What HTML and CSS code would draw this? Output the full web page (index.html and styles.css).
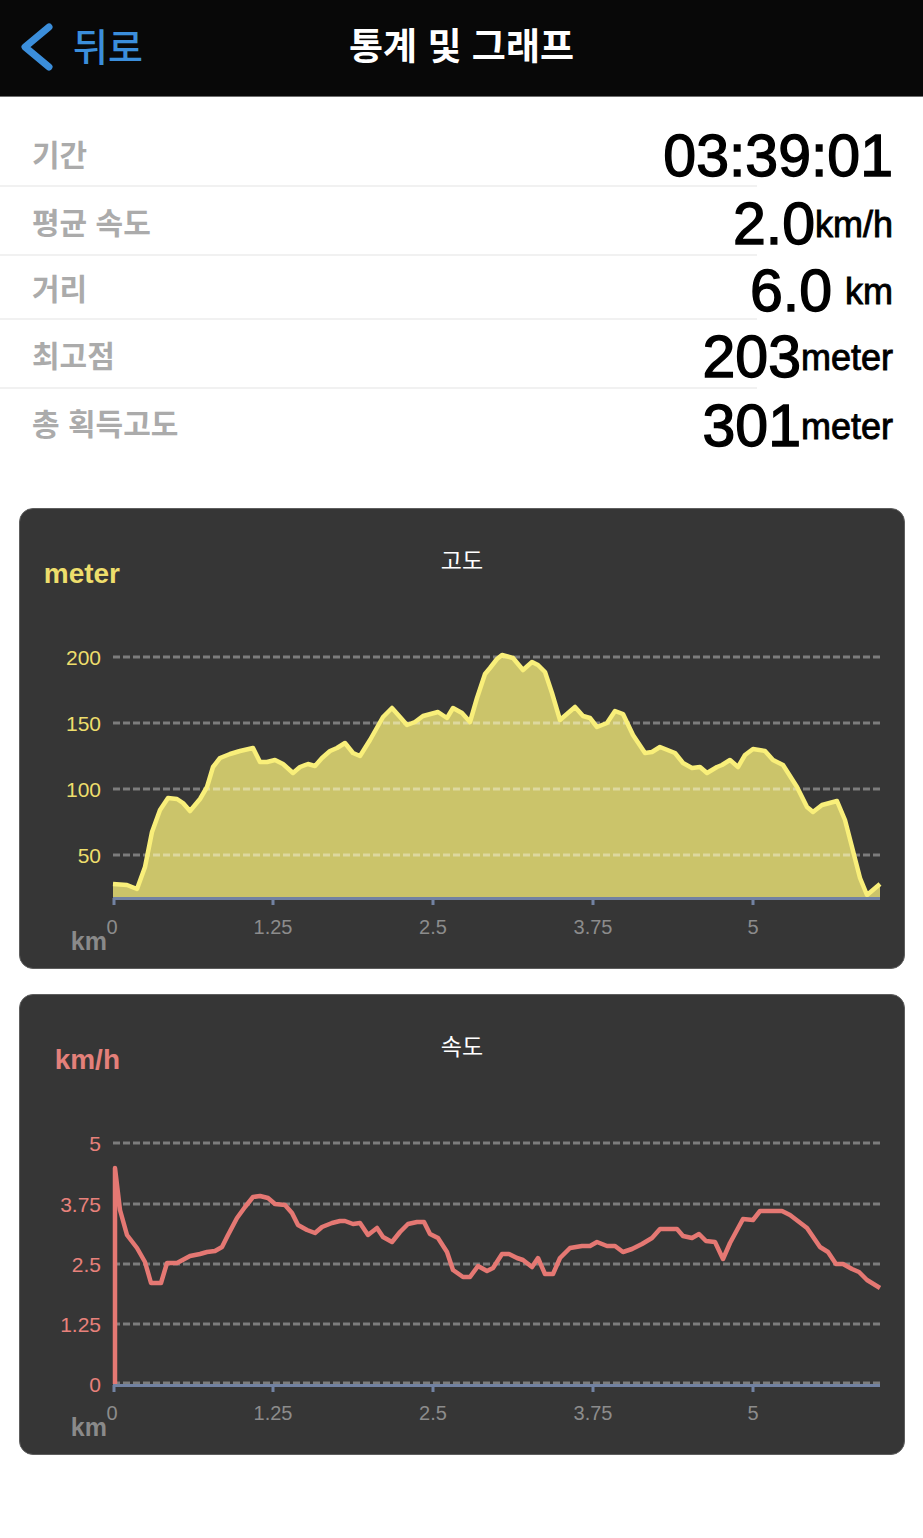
FILE: index.html
```html
<!DOCTYPE html>
<html lang="ko">
  <head>
    <meta charset="UTF-8" />
    <meta name="viewport" content="width=device-width, initial-scale=1" />
    <title>통계 및 그래프</title>
    <link rel="stylesheet" href="styles.css">
  </head>
  <body>
    <header class="navbar">
      <a class="back" href="#">
        <svg class="back-icon" viewBox="0 0 36 58">
          <path d="M31 9 L7 29 L31 49" />
        </svg>
        <span>뒤로</span>
      </a>
      <h1 class="nav-title">통계 및 그래프</h1>
      <div></div>
    </header>

    <section class="stats">
      <div class="stat-row row-1">
        <span class="label">기간</span>
        <span class="value"><span class="num">03:39:01</span></span>
      </div>
      <div class="sep"></div>
      <div class="stat-row row-2">
        <span class="label">평균 속도</span>
        <span class="value"><span class="num">2.0</span><span class="unit">km/h</span></span>
      </div>
      <div class="sep"></div>
      <div class="stat-row row-3">
        <span class="label">거리</span>
        <span class="value"><span class="num">6.0</span><span class="unit spaced">km</span></span>
      </div>
      <div class="sep"></div>
      <div class="stat-row row-4">
        <span class="label">최고점</span>
        <span class="value"><span class="num">203</span><span class="unit">meter</span></span>
      </div>
      <div class="sep"></div>
      <div class="stat-row row-5">
        <span class="label">총 획득고도</span>
        <span class="value"><span class="num">301</span><span class="unit">meter</span></span>
      </div>
    </section>

    <section class="charts">
      <!-- 고도 -->
      <div class="chart-card">
        <div class="chart-head">
          <span class="chart-unit alt">meter</span>
          <span class="chart-title">고도</span>
          <span></span>
        </div>
        <svg class="chart-plot" viewBox="20 601 884 367">
          <polygon class="alt-fill"
            points="113,884 127,885 137,889 145,867 152,832 160,810 168,798 177,799 183,803 190,811 200,799 207,787 213,767 220,758 230,754 240,751 253,748 260,762 267,762 275,760 283,764 293,773 300,767 308,764 315,766 322,758 330,751 337,748 345,743 353,753 360,756 370,740 383,717 392,708 400,717 407,725 415,722 423,716 438,712 447,718 453,708 462,713 470,722 477,698 485,674 490,668 497,659 502,655 513,658 523,670 532,662 538,665 545,672 552,693 560,720 575,707 583,716 590,718 597,727 607,723 615,711 623,714 633,735 645,753 652,752 660,747 675,753 683,763 692,768 700,767 707,773 717,767 722,765 730,760 738,767 745,755 753,749 765,751 773,760 783,765 797,787 807,807 813,812 822,805 837,801 845,820 852,847 860,878 867,895 880,884 880,897 113,897" />
          <g class="grid">
            <line x1="113" y1="657" x2="880" y2="657" />
            <line x1="113" y1="723" x2="880" y2="723" />
            <line x1="113" y1="789" x2="880" y2="789" />
            <line x1="113" y1="855" x2="880" y2="855" />
          </g>
          <polyline class="alt-line"
            points="113,884 127,885 137,889 145,867 152,832 160,810 168,798 177,799 183,803 190,811 200,799 207,787 213,767 220,758 230,754 240,751 253,748 260,762 267,762 275,760 283,764 293,773 300,767 308,764 315,766 322,758 330,751 337,748 345,743 353,753 360,756 370,740 383,717 392,708 400,717 407,725 415,722 423,716 438,712 447,718 453,708 462,713 470,722 477,698 485,674 490,668 497,659 502,655 513,658 523,670 532,662 538,665 545,672 552,693 560,720 575,707 583,716 590,718 597,727 607,723 615,711 623,714 633,735 645,753 652,752 660,747 675,753 683,763 692,768 700,767 707,773 717,767 722,765 730,760 738,767 745,755 753,749 765,751 773,760 783,765 797,787 807,807 813,812 822,805 837,801 845,820 852,847 860,878 867,895 880,884" />
          <g class="axis">
            <line x1="113" y1="898.5" x2="880" y2="898.5" />
            <line x1="114" y1="898" x2="114" y2="905" />
            <line x1="273" y1="898" x2="273" y2="905" />
            <line x1="433" y1="898" x2="433" y2="905" />
            <line x1="593" y1="898" x2="593" y2="905" />
            <line x1="753" y1="898" x2="753" y2="905" />
          </g>
          <g class="y-labels alt">
            <text x="101" y="657">200</text>
            <text x="101" y="723">150</text>
            <text x="101" y="789">100</text>
            <text x="101" y="855">50</text>
          </g>
          <g class="x-labels">
            <text x="112" y="927">0</text>
            <text x="273" y="927">1.25</text>
            <text x="433" y="927">2.5</text>
            <text x="593" y="927">3.75</text>
            <text x="753" y="927">5</text>
          </g>
          <text class="x-unit" x="107" y="950">km</text>
        </svg>
      </div>

      <!-- 속도 -->
      <div class="chart-card">
        <div class="chart-head">
          <span class="chart-unit spd">km/h</span>
          <span class="chart-title">속도</span>
          <span></span>
        </div>
        <svg class="chart-plot" viewBox="20 1087 884 367">
          <g class="grid">
            <line x1="113" y1="1143" x2="880" y2="1143" />
            <line x1="113" y1="1204" x2="880" y2="1204" />
            <line x1="113" y1="1264" x2="880" y2="1264" />
            <line x1="113" y1="1324" x2="880" y2="1324" />
            <line x1="113" y1="1383" x2="880" y2="1383" />
          </g>
          <polyline class="spd-line"
            points="115,1384 115,1168 120,1210 127,1235 137,1248 145,1262 151,1283 161,1283 167,1263 177,1263 190,1256 200,1254 207,1252 215,1251 222,1247 228,1235 237,1218 245,1207 253,1197 260,1196 268,1198 275,1204 285,1205 292,1213 298,1225 307,1230 315,1233 322,1227 332,1223 340,1221 345,1221 353,1224 360,1223 368,1235 377,1228 383,1237 392,1242 400,1232 408,1224 417,1222 424,1222 430,1234 438,1238 447,1252 453,1270 463,1277 470,1277 478,1266 487,1271 493,1268 502,1254 509,1254 517,1258 523,1260 532,1267 538,1258 545,1274 553,1274 560,1258 570,1248 582,1246 590,1246 597,1242 607,1246 615,1246 623,1252 632,1249 642,1244 652,1238 660,1229 677,1229 683,1236 692,1238 699,1234 706,1241 715,1242 723,1259 730,1243 743,1219 753,1220 760,1211 782,1211 790,1215 807,1228 820,1247 828,1252 836,1264 843,1264 852,1269 859,1272 867,1280 880,1288" />
          <g class="axis">
            <line x1="113" y1="1385.5" x2="880" y2="1385.5" />
            <line x1="114" y1="1385" x2="114" y2="1392" />
            <line x1="273" y1="1385" x2="273" y2="1392" />
            <line x1="433" y1="1385" x2="433" y2="1392" />
            <line x1="593" y1="1385" x2="593" y2="1392" />
            <line x1="753" y1="1385" x2="753" y2="1392" />
          </g>
          <g class="y-labels spd">
            <text x="101" y="1143">5</text>
            <text x="101" y="1204">3.75</text>
            <text x="101" y="1264">2.5</text>
            <text x="101" y="1324">1.25</text>
            <text x="101" y="1384">0</text>
          </g>
          <g class="x-labels">
            <text x="112" y="1413">0</text>
            <text x="273" y="1413">1.25</text>
            <text x="433" y="1413">2.5</text>
            <text x="593" y="1413">3.75</text>
            <text x="753" y="1413">5</text>
          </g>
          <text class="x-unit" x="107" y="1436">km</text>
        </svg>
      </div>
    </section>
  </body>
</html>
```

FILE: styles.css
```css
body {
  margin: 0;
  background: #fff;
  font-family: "Liberation Sans", Arial, sans-serif;
}
.navbar {
  display: grid;
  grid-template-columns: 1fr auto 1fr;
  align-items: center;
  height: 96px;
  background: #080808;
  border-bottom: 1px solid #6e6e6e;
}
.back {
  display: flex;
  align-items: center;
  padding-left: 18px;
  color: #3b8edb;
  text-decoration: none;
  font-family: "Noto Sans CJK KR", sans-serif;
  font-weight: 500;
  font-size: 38px;
  line-height: 1;
}
.back span {
  margin-top: -6px;
}
.back-icon {
  width: 36px;
  height: 58px;
  margin-right: 19px;
  margin-top: -3px;
}
.back-icon path {
  fill: none;
  stroke: #3b8edb;
  stroke-width: 7;
  stroke-linecap: round;
  stroke-linejoin: round;
}
.nav-title {
  margin: -7px 0 0;
  color: #fff;
  font-family: "Noto Sans CJK KR", sans-serif;
  font-weight: 700;
  font-size: 37px;
  line-height: 1;
}
.stats {
  padding-top: 23px;
}
.stat-row {
  display: flex;
  justify-content: space-between;
  align-items: center;
  padding: 0 30px 0 32px;
}
.row-1 {
  height: 65px;
}
.row-2,
.row-4 {
  height: 67px;
}
.row-3 {
  height: 62px;
}
.row-5 {
  height: 66px;
}
.sep {
  width: 757px;
  height: 2px;
  background: #f1f1f1;
}
.label {
  color: #ababab;
  font-family: "Noto Sans CJK KR", sans-serif;
  font-weight: 700;
  font-size: 30px;
  line-height: 1;
}
.value {
  padding-top: 8px;
  color: #000;
  line-height: 1;
  white-space: nowrap;
}
.num {
  font-size: 59px;
  -webkit-text-stroke: 1.4px #000;
}
.unit {
  font-size: 36px;
  vertical-align: 7px;
  -webkit-text-stroke: 0.9px #000;
}
.unit.spaced {
  margin-left: 13px;
}
.charts {
  margin-top: 53px;
}
.chart-card {
  margin: 0 18px 25px 19px;
  background: #363636;
  border: 1px solid #5e5e5e;
  border-radius: 14px;
  overflow: hidden;
}
.chart-head {
  display: grid;
  grid-template-columns: 1fr auto 1fr;
  align-items: start;
  height: 92px;
}
.chart-unit {
  width: 100px;
  margin-top: 51px;
  text-align: right;
  font-weight: bold;
  font-size: 28px;
  line-height: 1;
}
.chart-unit.alt {
  color: #eede6c;
}
.chart-unit.spd {
  color: #e4807a;
}
.chart-title {
  margin-top: 39px;
  color: #fff;
  font-family: "Noto Sans CJK KR", sans-serif;
  font-size: 23px;
  line-height: 1;
}
.chart-plot {
  display: block;
  width: 884px;
  height: 367px;
}
.grid line {
  stroke: rgba(255, 255, 255, 0.35);
  stroke-width: 3;
  stroke-dasharray: 7 3;
}
.alt-fill {
  fill: #cbc46a;
}
.alt-line {
  fill: none;
  stroke: #f9ef7a;
  stroke-width: 4.5;
  stroke-linejoin: round;
}
.spd-line {
  fill: none;
  stroke: #e57873;
  stroke-width: 4.5;
  stroke-linejoin: round;
}
.axis line {
  stroke: #7282a2;
  stroke-width: 3;
}
.y-labels text {
  font-family: "Liberation Sans", Arial, sans-serif;
  font-size: 21px;
  text-anchor: end;
  dominant-baseline: central;
}
.y-labels.alt text {
  fill: #eede6c;
}
.y-labels.spd text {
  fill: #e8817b;
}
.x-labels text {
  fill: #8c8c8c;
  font-family: "Liberation Sans", Arial, sans-serif;
  font-size: 20px;
  text-anchor: middle;
  dominant-baseline: central;
}
.x-unit {
  fill: #8a8a8a;
  font-family: "Liberation Sans", Arial, sans-serif;
  font-weight: bold;
  font-size: 25px;
  text-anchor: end;
}
```
